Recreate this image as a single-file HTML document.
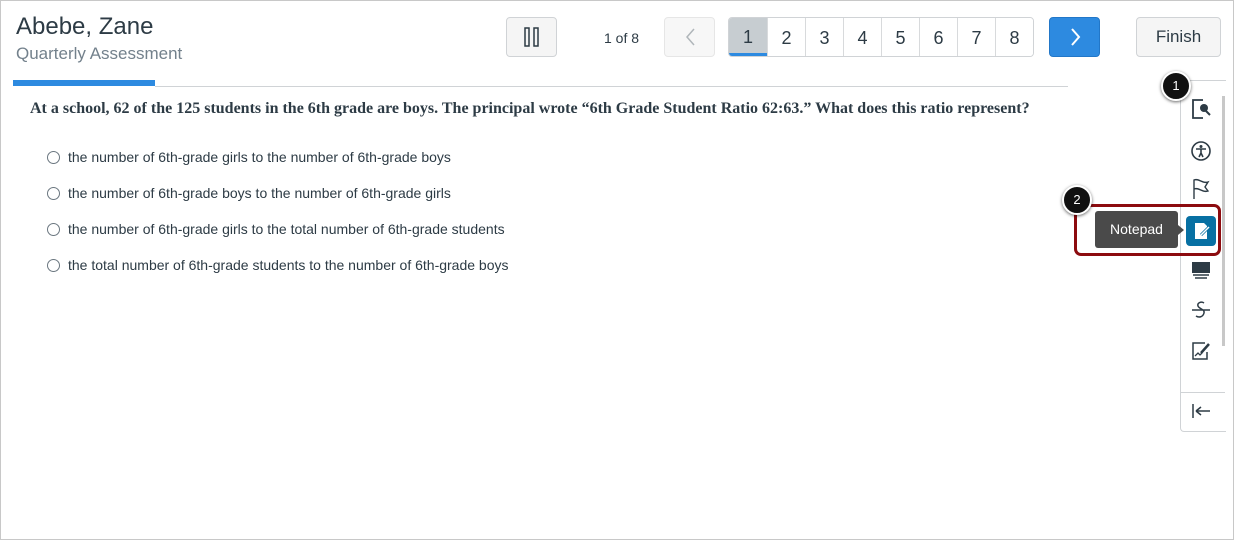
<!DOCTYPE html><html><head><style>
body{margin:0;width:1234px;height:540px;background:#fff;font-family:"Liberation Sans",sans-serif;position:relative;overflow:hidden}
.a{position:absolute}
.frame{left:0;top:0;width:1232px;height:538px;border:1px solid #c8c8c8}
.btn{position:absolute;top:17px;height:40px;border:1px solid #d0d3d6;border-radius:4px;background:#f5f5f5;box-sizing:border-box;display:flex;align-items:center;justify-content:center;color:#2d3b45}
.pg{position:absolute;top:17px;left:728px;height:40px;display:flex;border:1px solid #d0d3d6;border-radius:4px;overflow:hidden;box-sizing:border-box}
.pg div{width:38px;border-left:1px solid #d8dadc;display:flex;align-items:center;justify-content:center;font-size:18px;color:#2d3b45;background:#fff;padding-top:2px;box-sizing:border-box}
.pg div:first-child{border-left:0;background:#c7cdd1;border-bottom:3px solid #2d8ae0;padding-top:3px}
.opt{position:absolute;left:47px;font-size:14px;color:#2d3b45}
.opt span{display:inline-block;width:11px;height:11px;border:1px solid #6b7780;border-radius:50%;vertical-align:-2px;margin-right:8px}
.ic{position:absolute;left:1189px;width:24px;height:24px}
.badge{position:absolute;width:26px;height:26px;border-radius:50%;background:#111;color:#fff;font-size:13px;text-align:center;line-height:26px;border:2px solid #fff;box-shadow:0 1px 3px rgba(0,0,0,.6)}
</style></head><body>
<div class="a frame"></div>
<div class="a" style="left:16px;top:13px;font-size:24px;color:#2d3b45">Abebe, Zane</div>
<div class="a" style="left:16px;top:44px;font-size:17px;color:#73818c">Quarterly Assessment</div>
<div class="a" style="left:13px;top:80px;width:142px;height:6px;background:#2d8ae0"></div>
<div class="a" style="left:155px;top:86px;width:913px;height:1px;background:#d0d3d6"></div>
<div class="btn" style="left:506px;width:51px"><svg width="16" height="20"><rect x="1" y="1" width="4" height="18" fill="none" stroke="#2d3b45" stroke-width="1.5"/><rect x="10" y="1" width="4" height="18" fill="none" stroke="#2d3b45" stroke-width="1.5"/></svg></div>
<div class="a" style="left:604px;top:30px;font-size:14px;color:#2d3b45">1 of 8</div>
<div class="btn" style="left:664px;width:51px;background:#f7f7f7;border-color:#e6e6e6"><svg width="12" height="20"><path d="M10 2 L3 10 L10 18" fill="none" stroke="#b0b6ba" stroke-width="1.5"/></svg></div>
<div class="pg"><div>1</div><div>2</div><div>3</div><div>4</div><div>5</div><div>6</div><div>7</div><div>8</div></div>
<div class="btn" style="left:1049px;width:51px;background:#2d8ae0;border-color:#2277c8"><svg width="12" height="20"><path d="M3 2 L10 10 L3 18" fill="none" stroke="#fff" stroke-width="2"/></svg></div>
<div class="btn" style="left:1136px;width:85px;font-size:17px">Finish</div>
<div class="a" style="left:30px;top:100px;font-family:'Liberation Serif',serif;font-weight:bold;font-size:16px;color:#2d3b45;white-space:nowrap">At a school, 62 of the 125 students in the 6th grade are boys. The principal wrote “6th Grade Student Ratio 62:63.” What does this ratio represent?</div>
<div class="opt" style="top:149px"><span></span>the number of 6th-grade girls to the number of 6th-grade boys</div>
<div class="opt" style="top:185px"><span></span>the number of 6th-grade boys to the number of 6th-grade girls</div>
<div class="opt" style="top:221px"><span></span>the number of 6th-grade girls to the total number of 6th-grade students</div>
<div class="opt" style="top:257px"><span></span>the total number of 6th-grade students to the number of 6th-grade boys</div>
<div class="a" style="left:1180px;top:80px;width:45px;height:350px;border:1px solid #d0d3d6;border-right:0;border-radius:4px 0 0 4px;background:#fff"></div>
<div class="a" style="left:1222px;top:96px;width:3px;height:250px;background:#c8c8c8"></div>
<div class="a" style="left:1181px;top:392px;width:44px;height:1px;background:#d0d3d6"></div>
<svg class="ic" style="top:97px"><path d="M14 3H4v18h10" fill="none" stroke="#2d3b45" stroke-width="1.8"/><circle cx="15" cy="11" r="4" fill="#2d3b45"/><path d="M17 14l4 4" stroke="#2d3b45" stroke-width="2"/></svg>
<svg class="ic" style="top:139px"><circle cx="12" cy="12" r="9" fill="none" stroke="#2d3b45" stroke-width="1.6"/><circle cx="12" cy="7.5" r="1.5" fill="#2d3b45"/><path d="M7 10h10M12 10v4l-2 4M12 14l2 4" stroke="#2d3b45" stroke-width="1.6" fill="none"/></svg>
<svg class="ic" style="top:177px"><path d="M5 22V3c5-2 8 4 14 2l-3 5 3 4c-6 2-9-4-14-2" fill="none" stroke="#2d3b45" stroke-width="1.4"/></svg>
<div class="a" style="left:1186px;top:216px;width:30px;height:30px;background:#0770a3;border-radius:4px"></div>
<svg class="ic" style="left:1189px;top:219px"><path d="M6 4h9l3 3v13H6z" fill="#fff"/><path d="M12 16l8-8" stroke="#0770a3" stroke-width="3"/><path d="M12 16l8-8" stroke="#fff" stroke-width="1.5"/></svg>
<svg class="ic" style="top:257px"><rect x="3" y="5" width="18" height="11" fill="#2d3b45"/><path d="M4 18h16M6 21h12" stroke="#2d3b45" stroke-width="1.5"/></svg>
<svg class="ic" style="top:298px"><path d="M15 5c-3-2-7 0-6 3s7 3 6 7-5 5-8 3M3 12h18" fill="none" stroke="#2d3b45" stroke-width="1.5"/></svg>
<svg class="ic" style="top:339px"><path d="M16 4H4v16h14v-7" fill="none" stroke="#2d3b45" stroke-width="1.5"/><path d="M12 14l8-9" stroke="#2d3b45" stroke-width="2.5"/><path d="M6 17l3-3 2 2 2-2" fill="none" stroke="#2d3b45" stroke-width="1.3"/></svg>
<svg class="ic" style="top:400px"><path d="M4 4v14M7 11h14M7 11l5-4M7 11l5 4" fill="none" stroke="#2d3b45" stroke-width="1.5"/></svg>
<div class="a" style="left:1074px;top:204px;width:147px;height:52px;border:3px solid #8c0b0f;border-radius:7px;box-sizing:border-box"></div>
<div class="a" style="left:1095px;top:211px;width:83px;height:37px;background:#4a4a4a;border-radius:3px;color:#fff;font-size:14px;text-align:center;line-height:37px">Notepad</div>
<div class="a" style="left:1178px;top:225px;border:5px solid transparent;border-left:6px solid #4a4a4a"></div>
<div class="badge" style="left:1161px;top:71px">1</div>
<div class="badge" style="left:1062px;top:185px">2</div>
</body></html>
